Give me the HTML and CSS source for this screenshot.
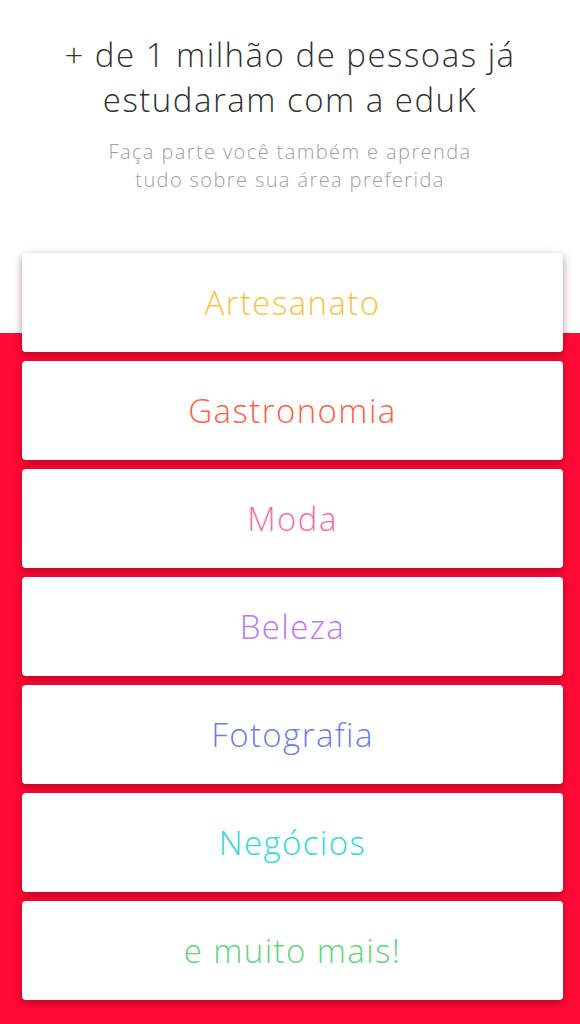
FILE: index.html
```html
<html>
<head>
    <meta charset="utf-8">
    <title>eduK</title>
    <link rel="stylesheet" href="styles.css">
</head>
<body>

<div id="intro">
    <h1>+ de 1 milhão de pessoas já<br>estudaram com a eduK</h1>
    <p>Faça parte você também e aprenda<br>tudo sobre sua área preferida</p>
</div>

<div id="areas">
    <a class="area artesanato" href="#">Artesanato</a>
    <a class="area gastronomia" href="#">Gastronomia</a>
    <a class="area moda" href="#">Moda</a>
    <a class="area beleza" href="#">Beleza</a>
    <a class="area fotografia" href="#">Fotografia</a>
    <a class="area negocios" href="#">Negócios</a>
    <a class="area mais" href="#">e muito mais!</a>
</div>

</body>
</html>
```

FILE: styles.css
```css
body {
    margin: 0px;
    background: #ffffff;
    font-family: "Open Sans", "Noto Sans", sans-serif;
}

#intro {
    text-align: center;
    padding-top: 32px;
    padding-bottom: 59px;
}

#intro h1 {
    margin: 0px;
    font-size: 33px;
    line-height: 45px;
    font-weight: 300;
    letter-spacing: 1.5px;
    color: #333333;
}

#intro p {
    margin: 0px;
    margin-top: 16px;
    font-size: 20px;
    line-height: 28px;
    font-weight: 300;
    letter-spacing: 1.4px;
    color: #a0a0a0;
}

#areas {
    display: flex;
    flex-direction: column;
    gap: 9px;
    padding: 0px 17px 26px 22px;
    background: linear-gradient(to bottom, #ffffff 0px, #ffffff 80px, #ff0a36 80px);
}

.area {
    display: flex;
    align-items: center;
    justify-content: center;
    height: 99px;
    background: #ffffff;
    border-radius: 4px;
    box-shadow: 0px 3px 8px rgba(90, 0, 20, 0.45);
    text-decoration: none;
    font-size: 33px;
    font-weight: 300;
    letter-spacing: 1.4px;
}

.artesanato { color: #fcc23f; }
.gastronomia { color: #ff6142; }
.moda { color: #ff6aa5; }
.beleza { color: #c473f2; }
.fotografia { color: #6c7df0; }
.negocios { color: #2ed9dc; }
.mais { color: #60d67e; }
```
